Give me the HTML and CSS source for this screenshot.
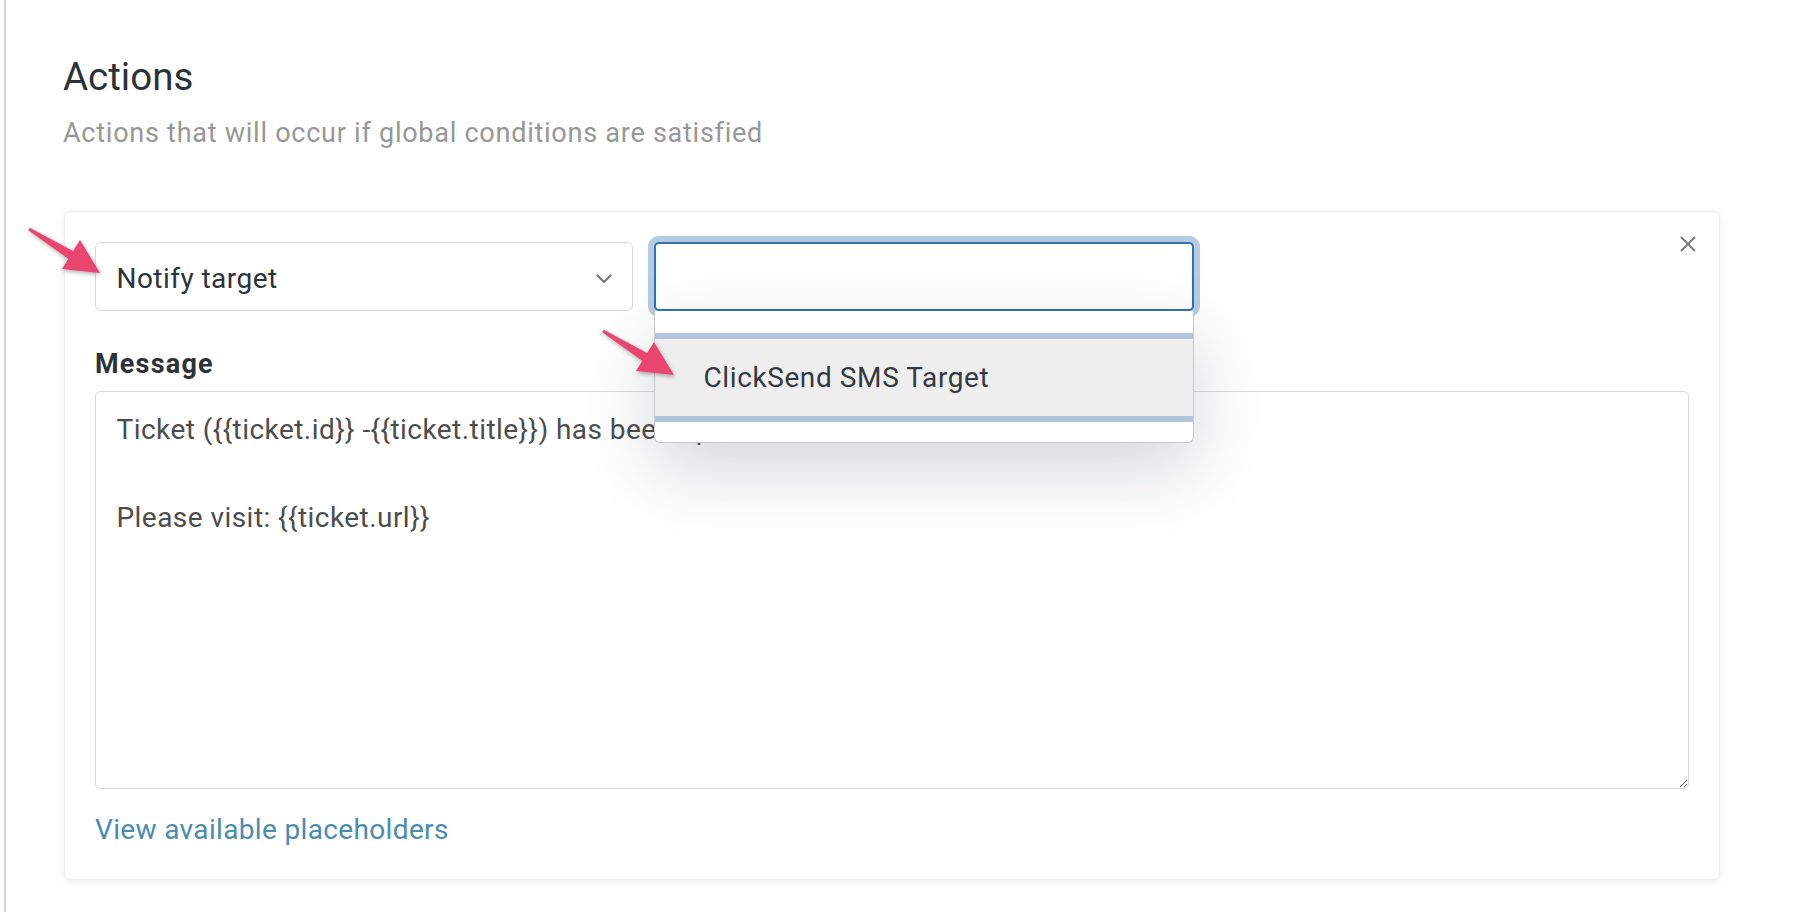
FILE: index.html
```html
<!DOCTYPE html>
<html lang="en">
<head>
<meta charset="utf-8">
<title>Actions</title>
<link rel="stylesheet" href="styles.css">
</head>
<body>
<div class="page">
  <h1 class="title">Actions</h1>
  <p class="subtitle">Actions that will occur if global conditions are satisfied</p>

  <section class="card">
    <div class="row">
      <div class="select">
        <span class="select-value">Notify target</span>
        <svg class="chevron" width="16" height="10" viewBox="0 0 16 10"><polyline points="1.5,1.5 8,8 14.5,1.5" fill="none" stroke="#777" stroke-width="2.2" stroke-linecap="round" stroke-linejoin="round"/></svg>
      </div>
      <div class="combo">
        <div class="combo-input"></div>
        <ul class="menu">
          <li class="menu-item">ClickSend SMS Target</li>
        </ul>
      </div>
      <button class="close" type="button" aria-label="Remove">
        <svg width="16" height="16" viewBox="0 0 16 16"><path d="M1.5 1.5 L14.5 14.5 M14.5 1.5 L1.5 14.5" stroke="#7a7a7a" stroke-width="2" stroke-linecap="round"/></svg>
      </button>
    </div>

    <label class="label">Message</label>
    <textarea class="message" readonly>Ticket ({{ticket.id}} -{{ticket.title}}) has been updated

Please visit: {{ticket.url}}</textarea>

    <a class="link" href="#">View available placeholders</a>
  </section>

  <svg class="arrow arrow-one" width="90" height="60" viewBox="-6 -6 90 60"><polygon points="0.8,-1.3 44.1,22.1 51,11 71,44 33,40 39.3,29.7 -0.8,1.3" fill="#ea4571"/></svg>
  <svg class="arrow arrow-two" width="90" height="60" viewBox="-6 -6 90 60"><polygon points="0.8,-1.3 44.1,22.1 51,11 71,44 33,40 39.3,29.7 -0.8,1.3" fill="#ea4571"/></svg>
</div>
</body>
</html>
```

FILE: styles.css
```css
* {
  box-sizing: border-box;
}

html, body {
  margin: 0;
  padding: 0;
  background: #ffffff;
}

body {
  font-family: Roboto, "Liberation Sans", Arial, sans-serif;
  color: #2c333a;
}

.page {
  position: relative;
  margin-left: 4px;
  border-left: 2px solid #d2d2d2;
  min-height: 912px;
  padding: 54px 0 0 57px;
}

.title {
  margin: 0;
  font-size: 38.5px;
  line-height: 46px;
  font-weight: 400;
  color: #2a3138;
}

.subtitle {
  margin: 15px 0 0;
  font-size: 27px;
  line-height: 36px;
  letter-spacing: 0.75px;
  color: #979797;
}

.card {
  margin: 60px 0 0 1px;
  width: 1656px;
  background: #fff;
  border: 1px solid #ececec;
  border-radius: 6px;
  box-shadow: 0 2px 8px rgba(0, 0, 0, 0.07);
  padding: 30px 30px 32.6px 30px;
}

.row {
  display: flex;
  align-items: flex-start;
  gap: 21px;
}

.select {
  width: 538px;
  height: 69px;
  border: 1.5px solid #dadada;
  border-radius: 6px;
  display: flex;
  align-items: center;
  justify-content: space-between;
  padding: 5px 20px 0 20.5px;
  background: #fff;
}

.select-value {
  font-size: 28px;
  line-height: 32px;
  letter-spacing: 0.45px;
  color: #2c333a;
}

.chevron {
  display: block;
  margin-top: -1px;
}

.combo {
  position: relative;
  width: 540px;
  height: 69px;
}

.combo-input {
  width: 540px;
  height: 69px;
  border: 2px solid #3170b6;
  border-radius: 5px;
  background: #fff;
  box-shadow: 0 0 0 6px #b5cbe2;
}

.menu {
  position: absolute;
  z-index: 10;
  left: 0;
  top: 69px;
  width: 540px;
  margin: 0;
  padding: 22px 0 19.5px;
  list-style: none;
  background: #fff;
  border: 1.5px solid #c9c9c9;
  border-top: none;
  border-radius: 0 0 6px 6px;
  box-shadow: 0 26px 70px rgba(40, 52, 64, 0.2);
}

.menu-item {
  height: 89px;
  border-top: 6px solid #b1c5da;
  border-bottom: 6px solid #b1c5da;
  background: #eeeeee;
  padding: 1px 0 0 48.5px;
  font-size: 28px;
  line-height: 76px;
  letter-spacing: 0.6px;
  color: #333a41;
}

.close {
  margin: -6px -7px 0 auto;
  padding: 0;
  width: 16px;
  height: 16px;
  border: none;
  background: none;
  display: block;
}

.close svg {
  display: block;
}

.label {
  display: block;
  margin: 36.5px 0 11.5px;
  font-size: 27px;
  line-height: 32px;
  font-weight: 700;
  letter-spacing: 1.2px;
  color: #2c3238;
}

.message {
  display: block;
  width: 1594px;
  height: 398px;
  margin: 0;
  border: 1.5px solid #d9d9d9;
  border-radius: 6px;
  padding: 16px 20.5px;
  font-family: Roboto, "Liberation Sans", Arial, sans-serif;
  font-size: 28px;
  line-height: 44px;
  letter-spacing: 0.45px;
  color: #4d4d4d;
  background: #fff;
  outline: none;
}

.link {
  display: inline-block;
  margin-top: 25.4px;
  font-size: 28px;
  line-height: 32px;
  letter-spacing: 0.35px;
  color: #4a8bb2;
  text-decoration: none;
}

.arrow {
  position: absolute;
  z-index: 20;
  filter: drop-shadow(1px 2px 2px rgba(0, 0, 0, 0.3));
}

.arrow-one {
  left: 17px;
  top: 223px;
}

.arrow-two {
  left: 591px;
  top: 325px;
}
```
